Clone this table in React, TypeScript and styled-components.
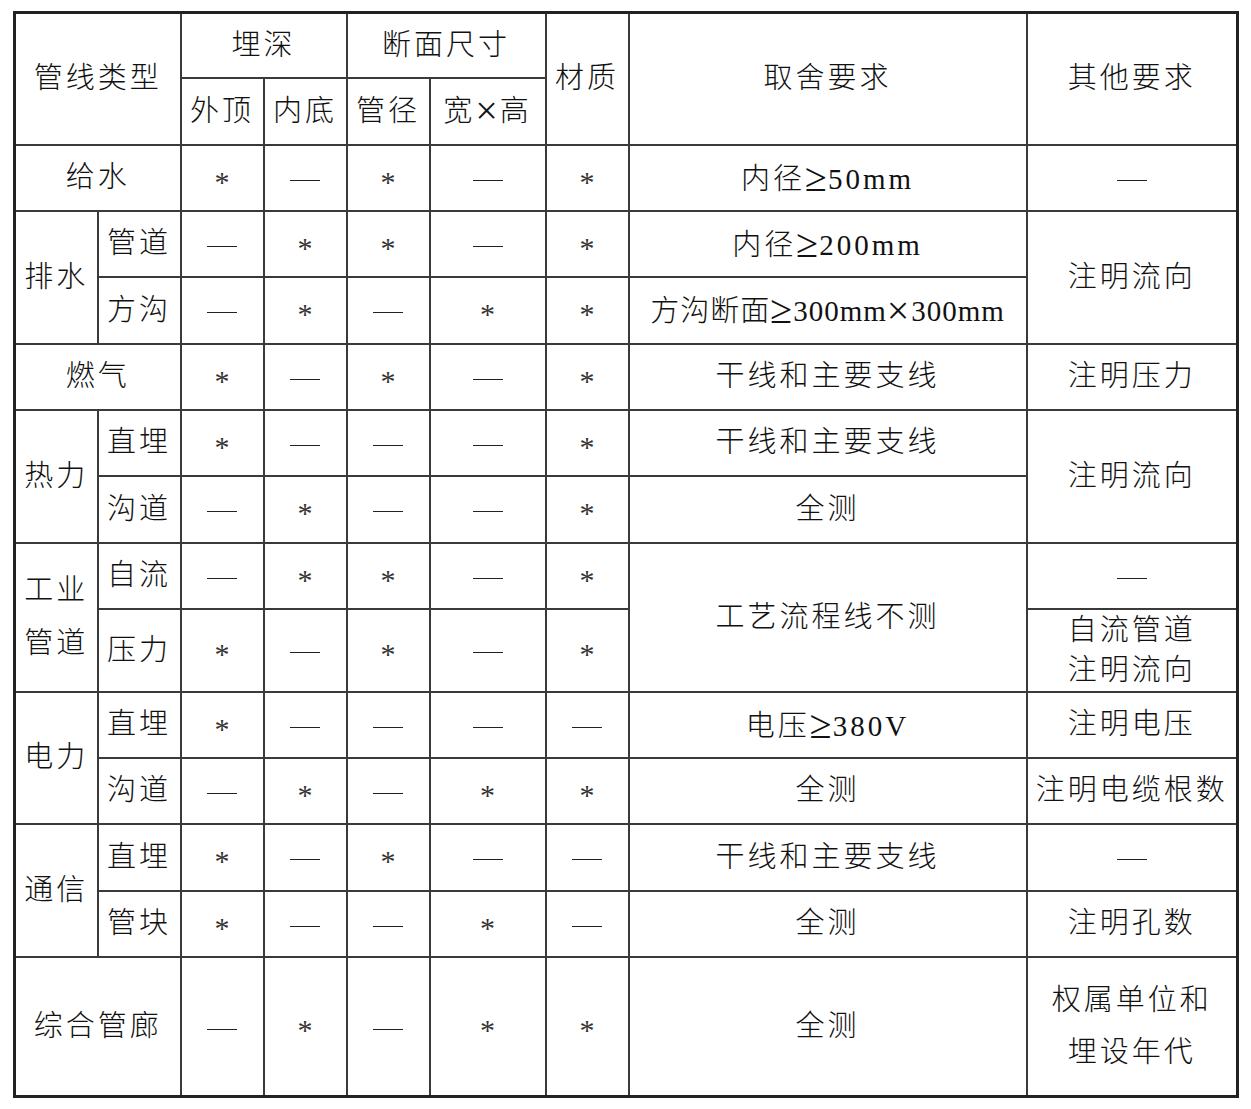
import React from "react";
import styled, { createGlobalStyle } from "styled-components";

const GlobalStyle = createGlobalStyle`
  html, body {
    margin: 0;
    padding: 0;
    background: #fff;
  }
  body {
    font-family: "Liberation Serif", "Noto Sans CJK SC", serif;
    color: #111;
  }
`;

const Wrap = styled.div`
  padding: 11px 0 0 13px;
`;

const Sheet = styled.table`
  border-collapse: collapse;
  table-layout: fixed;
  width: 1224px;
  border: 3px solid #222;
`;

const Cell = styled.td<{ $lh?: number; $ls?: number }>`
  border: 2px solid #3a3a3a;
  padding: 0;
  text-align: center;
  vertical-align: middle;
  font-size: 29px;
  font-weight: 300;
  letter-spacing: ${(p) => p.$ls ?? 3}px;
  line-height: ${(p) => (p.$lh ? `${p.$lh}px` : "1.2")};
  white-space: nowrap;
`;

const Star = styled.span`
  display: inline-block;
  font-family: "Liberation Serif", serif;
  font-size: 30px;
  letter-spacing: 0;
  line-height: 1;
  vertical-align: -6px;
  color: #333;
`;

const Sym = styled.span`
  font-family: "Liberation Serif", serif;
  font-size: 40px;
  letter-spacing: 1px;
  line-height: 1;
  vertical-align: -2px;
`;

const Cross = styled.span`
  font-family: "Liberation Serif", serif;
  font-size: 40px;
  letter-spacing: 2px;
  line-height: 1;
  vertical-align: -3px;
`;

const Dash = styled.span`
  display: inline-block;
  width: 30px;
  height: 1px;
  background: #222;
  vertical-align: middle;
`;

const Row = styled.tr<{ $h: number }>`
  height: ${(p) => p.$h}px;
`;

type V = "*" | "-";

function Mark({ v }: { v: V }) {
  return v === "*" ? <Star>*</Star> : <Dash aria-label="—" />;
}

function Marks({ list }: { list: V[] }) {
  return (
    <>
      {list.map((v, i) => (
        <Cell key={i}>
          <Mark v={v} />
        </Cell>
      ))}
    </>
  );
}

function Lines({ text }: { text: string[] }) {
  return (
    <>
      {text.map((t, i) => (
        <React.Fragment key={i}>
          {i > 0 && <br />}
          {t}
        </React.Fragment>
      ))}
    </>
  );
}

const Ge = () => <Sym>≥</Sym>;

const widths = [83, 83, 83, 83, 83, 116, 83, 398, 211];

export default function App() {
  return (
    <>
      <GlobalStyle />
      <Wrap>
        <Sheet>
          <colgroup>
            {widths.map((w, i) => (
              <col key={i} style={{ width: w }} />
            ))}
          </colgroup>
          <tbody>
            <Row $h={65}>
              <Cell as="th" colSpan={2} rowSpan={2}>管线类型</Cell>
              <Cell as="th" colSpan={2}>埋深</Cell>
              <Cell as="th" colSpan={2}>断面尺寸</Cell>
              <Cell as="th" rowSpan={2}>材质</Cell>
              <Cell as="th" rowSpan={2}>取舍要求</Cell>
              <Cell as="th" rowSpan={2}>其他要求</Cell>
            </Row>
            <Row $h={67}>
              <Cell as="th">外顶</Cell>
              <Cell as="th">内底</Cell>
              <Cell as="th">管径</Cell>
              <Cell as="th">
                宽<Cross>×</Cross>高
              </Cell>
            </Row>

            <Row $h={66}>
              <Cell colSpan={2}>给水</Cell>
              <Marks list={["*", "-", "*", "-", "*"]} />
              <Cell>
                内径<Ge />50mm
              </Cell>
              <Cell><Dash aria-label="—" /></Cell>
            </Row>

            <Row $h={66}>
              <Cell rowSpan={2}>排水</Cell>
              <Cell>管道</Cell>
              <Marks list={["-", "*", "*", "-", "*"]} />
              <Cell>
                内径<Ge />200mm
              </Cell>
              <Cell rowSpan={2}>注明流向</Cell>
            </Row>
            <Row $h={67}>
              <Cell>方沟</Cell>
              <Marks list={["-", "*", "-", "*", "*"]} />
              <Cell $ls={1}>
                方沟断面<Ge />300mm<Cross>×</Cross>300mm
              </Cell>
            </Row>

            <Row $h={66}>
              <Cell colSpan={2}>燃气</Cell>
              <Marks list={["*", "-", "*", "-", "*"]} />
              <Cell>干线和主要支线</Cell>
              <Cell>注明压力</Cell>
            </Row>

            <Row $h={66}>
              <Cell rowSpan={2}>热力</Cell>
              <Cell>直埋</Cell>
              <Marks list={["*", "-", "-", "-", "*"]} />
              <Cell>干线和主要支线</Cell>
              <Cell rowSpan={2}>注明流向</Cell>
            </Row>
            <Row $h={67}>
              <Cell>沟道</Cell>
              <Marks list={["-", "*", "-", "-", "*"]} />
              <Cell>全测</Cell>
            </Row>

            <Row $h={66}>
              <Cell rowSpan={2} $lh={53}>
                <Lines text={["工业", "管道"]} />
              </Cell>
              <Cell>自流</Cell>
              <Marks list={["-", "*", "*", "-", "*"]} />
              <Cell rowSpan={2}>工艺流程线不测</Cell>
              <Cell><Dash aria-label="—" /></Cell>
            </Row>
            <Row $h={83}>
              <Cell>压力</Cell>
              <Marks list={["*", "-", "*", "-", "*"]} />
              <Cell $lh={40}>
                <Lines text={["自流管道", "注明流向"]} />
              </Cell>
            </Row>

            <Row $h={66}>
              <Cell rowSpan={2}>电力</Cell>
              <Cell>直埋</Cell>
              <Marks list={["*", "-", "-", "-", "-"]} />
              <Cell>
                电压<Ge />380V
              </Cell>
              <Cell>注明电压</Cell>
            </Row>
            <Row $h={66}>
              <Cell>沟道</Cell>
              <Marks list={["-", "*", "-", "*", "*"]} />
              <Cell>全测</Cell>
              <Cell>注明电缆根数</Cell>
            </Row>

            <Row $h={67}>
              <Cell rowSpan={2}>通信</Cell>
              <Cell>直埋</Cell>
              <Marks list={["*", "-", "*", "-", "-"]} />
              <Cell>干线和主要支线</Cell>
              <Cell><Dash aria-label="—" /></Cell>
            </Row>
            <Row $h={66}>
              <Cell>管块</Cell>
              <Marks list={["*", "-", "-", "*", "-"]} />
              <Cell>全测</Cell>
              <Cell>注明孔数</Cell>
            </Row>

            <Row $h={140}>
              <Cell colSpan={2}>综合管廊</Cell>
              <Marks list={["-", "*", "-", "*", "*"]} />
              <Cell>全测</Cell>
              <Cell $lh={52}>
                <Lines text={["权属单位和", "埋设年代"]} />
              </Cell>
            </Row>
          </tbody>
        </Sheet>
      </Wrap>
    </>
  );
}
